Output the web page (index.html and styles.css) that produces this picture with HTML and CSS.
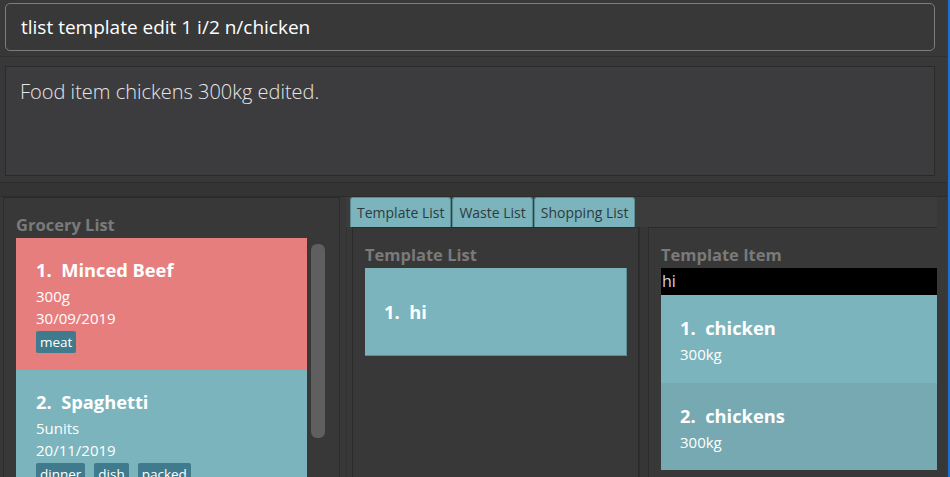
FILE: index.html
```html
<!DOCTYPE html>
<html>
<head>
<meta charset="utf-8">
<link rel="stylesheet" href="styles.css">
</head>
<body>
<div class="window">
  <div class="main">
    <div class="command-area">
      <div class="command-box">tlist template edit 1 i/2 n/chicken</div>
    </div>
    <div class="result-area">
      <div class="result-box">Food item chickens 300kg edited.</div>
    </div>
    <div class="divider"></div>
    <div class="lower">
      <div class="grocery-panel">
        <div class="panel-label">Grocery List</div>
        <div class="grocery-body">
          <div class="card-list">
            <div class="card red">
              <div class="card-title">1.&nbsp; Minced Beef</div>
              <div class="card-line">300g</div>
              <div class="card-line">30/09/2019</div>
              <div class="tags"><span class="tag">meat</span></div>
            </div>
            <div class="card teal">
              <div class="card-title">2.&nbsp; Spaghetti</div>
              <div class="card-line">5units</div>
              <div class="card-line">20/11/2019</div>
              <div class="tags"><span class="tag">dinner</span><span class="tag">dish</span><span class="tag">packed</span></div>
            </div>
          </div>
          <div class="scrollbar"><div class="thumb"></div></div>
        </div>
      </div>
      <div class="tab-pane">
        <div class="tab-header">
          <div class="tab">Template List</div>
          <div class="tab">Waste List</div>
          <div class="tab">Shopping List</div>
        </div>
        <div class="tab-content">
          <div class="tpl-list-panel">
            <div class="panel-label">Template List</div>
            <div class="tpl-card"><div class="card-title">1.&nbsp; hi</div></div>
          </div>
          <div class="split-divider"></div>
          <div class="tpl-item-panel">
            <div class="panel-label">Template Item</div>
            <div class="tpl-name">hi</div>
            <div class="item-card">
              <div class="card-title">1.&nbsp; chicken</div>
              <div class="card-line">300kg</div>
            </div>
            <div class="item-card alt">
              <div class="card-title">2.&nbsp; chickens</div>
              <div class="card-line">300kg</div>
            </div>
          </div>
        </div>
      </div>
    </div>
  </div>
  <div class="edge"></div>
</div>
</body>
</html>
```
FILE: styles.css
```css
* { box-sizing: border-box; }
html, body {
  margin: 0;
  padding: 0;
  width: 950px;
  height: 477px;
  overflow: hidden;
  background: #383838;
  font-family: "Open Sans", "Noto Sans", sans-serif;
}
.window {
  display: flex;
  width: 950px;
  height: 477px;
}
.main {
  width: 947px;
  display: flex;
  flex-direction: column;
  background: #383838;
}
.edge {
  width: 3px;
  background: linear-gradient(to right, #3a3a3a 0 1px, #1f6fd0 1px 3px);
}
.command-area {
  padding: 3px 12px 0 5px;
  height: 57px;
  flex: none;
  border-bottom: 1px solid #303030;
}
.command-box {
  height: 48px;
  border: 1px solid #7d7d7d;
  border-radius: 5px;
  background: #383838;
  color: #ffffff;
  font-size: 19px;
  padding: 10px 0 0 15px;
  line-height: 26px;
}
.result-area {
  padding: 9px 12px 0 5px;
  height: 125px;
  flex: none;
}
.result-box {
  height: 110px;
  border: 1px solid #2a2a2a;
  background: #3c3c3e;
  color: #e6e6e6;
  font-size: 20px;
  font-weight: 300;
  line-height: 26px;
  padding: 12px 0 0 14px;
}
.divider {
  height: 15px;
  flex: none;
  border-top: 1px solid #2c2c2c;
  border-bottom: 1px solid #2c2c2c;
  background: #343434;
}
.lower {
  flex: 1;
  display: flex;
  min-height: 0;
}
.grocery-panel {
  width: 337px;
  margin-left: 3px;
  border: 1px solid #2b2b2b;
  border-bottom: none;
  padding: 12px 0 0 12px;
  background: #383838;
}
.panel-label {
  color: #7a7a7a;
  font-weight: 700;
  font-size: 16.5px;
  line-height: 22px;
  height: 28px;
  padding-top: 4px;
}
.grocery-body {
  display: flex;
  gap: 4px;
}
.card-list {
  width: 291px;
}
.card {
  padding: 18px 0 0 20px;
  color: #fff;
}
.card.red { background: #e77e7e; height: 132px; }
.card.teal { background: #7bb4bc; height: 140px; }
.card-title {
  font-weight: 700;
  font-size: 18.3px;
  line-height: 28px;
  height: 28px;
}
.card-line {
  font-size: 15px;
  line-height: 22px;
}
.card-title + .card-line { margin-top: 1px; }
.tags {
  display: flex;
  gap: 9px;
  margin-top: 2px;
}
.tag {
  background: #3f7b8c;
  color: #fff;
  font-size: 13.5px;
  line-height: 22px;
  height: 22px;
  padding: 0 4px;
  border-radius: 2px;
}
.scrollbar {
  width: 14px;
  padding-top: 6px;
}
.thumb {
  height: 194px;
  background: #5f5f5f;
  border-radius: 6px;
}
.tab-pane {
  flex: 1;
  display: flex;
  flex-direction: column;
  margin-left: 6px;
  margin-right: 10px;
}
.tab-header {
  height: 30px;
  display: flex;
  gap: 1px;
  padding-left: 4px;
  background: #3c3c3c;
}
.tab {
  background: #7bb4bc;
  color: #2f3a3c;
  font-size: 14px;
  line-height: 29px;
  height: 30px;
  padding: 0 6px;
  border-radius: 3px 3px 0 0;
  border: 1px solid #5d8b92;
  border-bottom: none;
}
.tab-content {
  flex: 1;
  display: flex;
  background: #383838;
  padding-left: 5px;
  border-left: 1px solid #333;
}
.tpl-list-panel {
  width: 287px;
  border: 1px solid #2b2b2b;
  border-bottom: none;
  padding: 12px 11px 0 12px;
}
.tpl-card {
  height: 88px;
  background: #7bb4bc;
  border-right: 1px solid #5d8f96;
  border-bottom: 1px solid #5d8f96;
  padding: 30px 0 0 19px;
  color: #fff;
}
.split-divider {
  width: 10px;
  border-left: 1px solid #2d2d2d;
  border-right: 1px solid #2d2d2d;
  background: #363636;
}
.tpl-item-panel {
  flex: 1;
  border-top: 1px solid #2b2b2b;
  padding: 12px 0 0 12px;
}
.tpl-name {
  background: #000;
  color: #cfd6e6;
  font-size: 16px;
  line-height: 27px;
  height: 27px;
  padding-left: 1px;
}
.item-card {
  height: 88px;
  background: #7bb4bc;
  color: #fff;
  padding: 19px 0 0 19px;
}
.item-card.alt { background: #76a9b1; height: 87px; }
```
